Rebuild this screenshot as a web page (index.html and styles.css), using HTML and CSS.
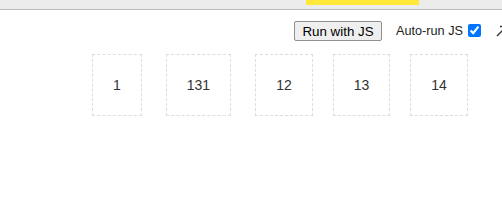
FILE: index.html
```html
<!DOCTYPE html>
<html lang="en">
<head>
    <meta charset="UTF-8">
    <title>Run with JS</title>
    <link rel="stylesheet" href="styles.css">
</head>
<body>

<div class="topstrip">
    <div class="highlight"></div>
</div>

<div class="toolbar">
    <button type="button" class="run-btn">Run with JS</button>
    <label class="autorun">Auto-run JS <input type="checkbox" checked></label>
    <svg class="expand" width="14" height="14" viewBox="0 0 14 14">
        <path d="M2 12 L11 3 M5 2.5 H11.5 V9" fill="none" stroke="#333" stroke-width="1.4"/>
    </svg>
</div>

<div class="boxes">
    <div class="box wide">1</div>
    <div class="box wide">131</div>
    <div class="box">12</div>
    <div class="box">13</div>
    <div class="box">14</div>
</div>

</body>
</html>
```

FILE: styles.css
```css
body { margin: 0; font-family: "Liberation Sans", Arial, sans-serif; color: #333; background: #fff; overflow: hidden; }
.topstrip { height: 9px; background-color: #ececec; border-bottom: 1px solid #bdbdbd; position: relative; }
.highlight { position: absolute; left: 306px; top: 0; width: 113px; height: 5px; background-color: #ffe83a; }
.toolbar { display: flex; align-items: center; padding: 11px 0 0 294px; height: 20px; white-space: nowrap; }
.toolbar > * { flex: none; }
.run-btn { font-family: "Liberation Sans", Arial, sans-serif; font-size: 13.33px; color: #000; height: 20px; width: 88px; padding: 0; background-color: #efefef; border: 1px solid #8f8f8f; border-radius: 2px; }
.autorun { display: flex; align-items: center; margin-left: 14px; font-size: 12.7px; color: #222; }
.autorun input { width: 13px; height: 13px; margin: 0 0 1px 5px; }
.expand { margin-left: 14px; }
.boxes { display: flex; margin: 13px 0 0 92px; }
.box { border: 1px dashed #ddd; padding: 22px 20px; font-size: 14px; line-height: 16px; margin-right: 20px; }
.box.wide { margin-right: 24px; }
```
